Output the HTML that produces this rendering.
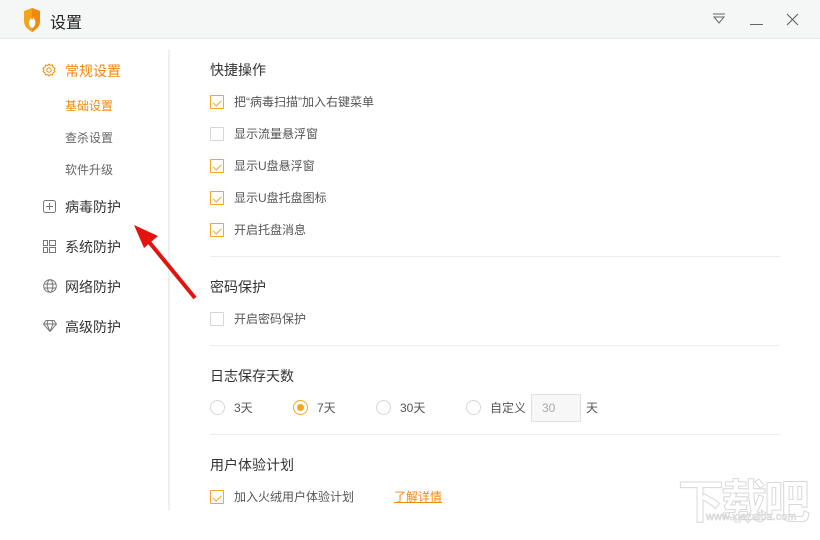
<!DOCTYPE html>
<html><head><meta charset="utf-8"><style>
*{margin:0;padding:0;box-sizing:border-box}
body{width:820px;height:540px;background:#fff;font-family:"Liberation Sans","Noto Sans CJK SC",sans-serif;position:relative;overflow:hidden;color:#333}
.a{position:absolute;white-space:nowrap}
.tb{position:absolute;left:0;top:0;width:820px;height:39px;background:#f5f6f6;border-bottom:1px solid #e8e8e8}
.cb{position:absolute;width:14px;height:14px;border:1px solid #f5a623;border-radius:1px}
.cb.off{border-color:#d6d6d6}
.cb:not(.off)::after{content:"";position:absolute;left:4px;top:1.5px;width:3.5px;height:6.5px;border:solid #f5a623;border-width:0 1.6px 1.6px 0;transform:rotate(45deg)}
.lbl{font-size:12px;color:#555}
.h{font-size:14px;color:#333}
.sep{position:absolute;left:210px;width:570px;height:1px;background:#ececec}
.rd{position:absolute;width:15px;height:15px;border:1px solid #d6d6d6;border-radius:50%}
.nav{font-size:14px;color:#333}
.sub{font-size:12px;color:#666}
</style></head><body>
<div class="tb"></div>
<svg class="a" style="left:22px;top:8px" width="20" height="24" viewBox="0 0 20 24"><path d="M2 3 L10 0 L18 3 L18 13 C18 19 13 22 10 24 C7 22 2 19 2 13 Z" fill="#f7a21b"/><path d="M10 0 L18 3 L18 13 C18 19 13 22 10 24 Z" fill="#f08a0c"/><path d="M10 20 C6 18 6 14 9 10 C10 12 11 12 11 9 C13 11 14 14 13 17 C12 19 11 20 10 20Z" fill="#fff"/></svg>
<div class="a" style="left:50px;top:9px;font-size:16px;color:#222">设置</div>
<svg class="a" style="left:712px;top:13px" width="14" height="12"><line x1="1" y1="1" x2="13" y2="1" stroke="#666"/><path d="M2 4 L12 4 L7 10 Z" fill="none" stroke="#666"/></svg>
<div class="a" style="left:750px;top:24px;width:13px;height:1px;background:#666"></div>
<svg class="a" style="left:786px;top:13px" width="13" height="13"><path d="M1 1L12 12M12 1L1 12" stroke="#666" stroke-width="1.2"/></svg>
<div class="a" style="left:168px;top:50px;width:2px;height:460px;background:#efefef"></div>
<svg class="a" style="left:42px;top:63px" width="14" height="14" viewBox="0 0 14 14"><circle cx="7" cy="7" r="2.2" fill="none" stroke="#f08a0c"/><path d="M7 1 L8.3 2.5 L10.5 2 L11 4.2 L13 5.3 L12 7 L13 8.7 L11 9.8 L10.5 12 L8.3 11.5 L7 13 L5.7 11.5 L3.5 12 L3 9.8 L1 8.7 L2 7 L1 5.3 L3 4.2 L3.5 2 L5.7 2.5Z" fill="none" stroke="#f08a0c"/></svg>
<div class="a nav" style="left:65px;top:61px;color:#f08a0c">常规设置</div>
<div class="a sub" style="left:65px;top:97px;color:#f08a0c">基础设置</div>
<div class="a sub" style="left:65px;top:129px">查杀设置</div>
<div class="a sub" style="left:65px;top:161px">软件升级</div>
<svg class="a" style="left:43px;top:200px" width="13" height="13"><rect x=".5" y=".5" width="12" height="12" rx="2" fill="none" stroke="#777"/><path d="M6.5 3v7M3 6.5h7" stroke="#777"/></svg>
<div class="a nav" style="left:65px;top:197px">病毒防护</div>
<svg class="a" style="left:43px;top:240px" width="13" height="13"><rect x=".5" y=".5" width="4" height="5" fill="none" stroke="#777"/><rect x=".5" y="7.5" width="4" height="5" fill="none" stroke="#777"/><rect x="6.5" y=".5" width="6" height="5" fill="none" stroke="#777"/><rect x="6.5" y="7.5" width="6" height="5" fill="none" stroke="#777"/></svg>
<div class="a nav" style="left:65px;top:237px">系统防护</div>
<svg class="a" style="left:43px;top:279px" width="14" height="14"><circle cx="7" cy="7" r="6.3" fill="none" stroke="#777"/><ellipse cx="7" cy="7" rx="2.8" ry="6.3" fill="none" stroke="#777"/><path d="M1 5h12M1 9h12" stroke="#777"/></svg>
<div class="a nav" style="left:65px;top:277px">网络防护</div>
<svg class="a" style="left:43px;top:320px" width="14" height="12"><path d="M3 .5h8l2.5 3.5L7 11.5.5 4Z M.5 4h13M5 .5 4 4 7 11.5 10 4 9 .5" fill="none" stroke="#777"/></svg>
<div class="a nav" style="left:65px;top:317px">高级防护</div>
<svg class="a" style="left:120px;top:215px" width="90" height="95"><line x1="75" y1="83" x2="25" y2="22" stroke="#e3140f" stroke-width="4"/><path d="M14 10 L38 21 L24 33Z" fill="#e3140f"/></svg>

<div class="a h" style="left:210px;top:60px">快捷操作</div>
<div class="cb" style="left:210px;top:95px"></div><div class="a lbl" style="left:234px;top:93px">把“病毒扫描”加入右键菜单</div>
<div class="cb off" style="left:210px;top:127px"></div><div class="a lbl" style="left:234px;top:125px">显示流量悬浮窗</div>
<div class="cb" style="left:210px;top:159px"></div><div class="a lbl" style="left:234px;top:157px">显示U盘悬浮窗</div>
<div class="cb" style="left:210px;top:191px"></div><div class="a lbl" style="left:234px;top:189px">显示U盘托盘图标</div>
<div class="cb" style="left:210px;top:223px"></div><div class="a lbl" style="left:234px;top:221px">开启托盘消息</div>
<div class="sep" style="top:256px"></div>
<div class="a h" style="left:210px;top:277px">密码保护</div>
<div class="cb off" style="left:210px;top:312px"></div><div class="a lbl" style="left:234px;top:310px">开启密码保护</div>
<div class="sep" style="top:345px"></div>
<div class="a h" style="left:210px;top:366px">日志保存天数</div>
<div class="rd" style="left:210px;top:400px"></div><div class="a lbl" style="left:234px;top:399px">3天</div>
<div class="rd" style="left:293px;top:400px;border-color:#f5a623"><div style="position:absolute;left:3px;top:3px;width:7px;height:7px;border-radius:50%;background:#f5a623"></div></div><div class="a lbl" style="left:317px;top:399px">7天</div>
<div class="rd" style="left:376px;top:400px"></div><div class="a lbl" style="left:400px;top:399px">30天</div>
<div class="rd" style="left:466px;top:400px"></div><div class="a lbl" style="left:490px;top:399px">自定义</div>
<div class="a" style="left:531px;top:394px;width:50px;height:28px;border:1px solid #e0e0e0;background:#f7f7f7;font-size:12px;color:#aaa;padding:6px 0 0 10px">30</div>
<div class="a lbl" style="left:586px;top:399px">天</div>
<div class="sep" style="top:434px"></div>
<div class="a h" style="left:210px;top:455px">用户体验计划</div>
<div class="cb" style="left:210px;top:490px"></div><div class="a lbl" style="left:234px;top:488px">加入火绒用户体验计划</div>
<div class="a" style="left:394px;top:488px;font-size:12px;color:#f08a0c;text-decoration:underline">了解详情</div>
<div class="a" style="left:678px;top:466px;font-size:46px;font-weight:bold;color:#fff;-webkit-text-stroke:1px #d8d8d8;letter-spacing:-3px">下载吧</div>
<div class="a" style="left:706px;top:511px;font-size:11px;color:#fff;-webkit-text-stroke:.5px #ccc">www.xiazaiba.com</div>
</body></html>
